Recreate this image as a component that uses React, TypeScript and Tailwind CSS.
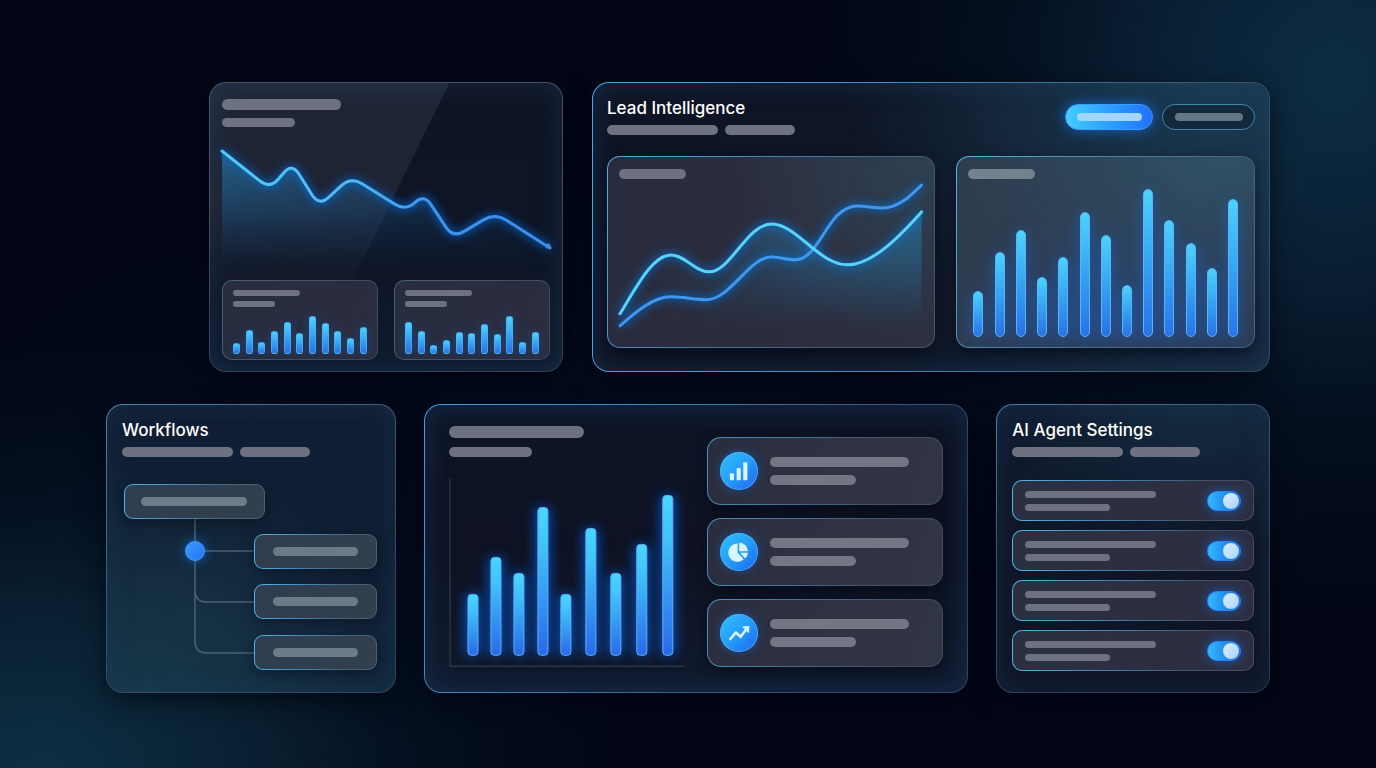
import type { ReactNode } from 'react';
import { clsx } from 'clsx';

type Point = [number, number];

/** Builds a polyline path whose inner corners are rounded off by `radius`. */
function roundedPath(points: Point[], radius: number): string {
  const toward = (from: Point, to: Point): Point => {
    const length = Math.hypot(to[0] - from[0], to[1] - from[1]);
    const t = Math.min(radius / length, 0.5);
    return [from[0] + (to[0] - from[0]) * t, from[1] + (to[1] - from[1]) * t];
  };
  let d = `M${points[0].join(' ')}`;
  for (let i = 1; i < points.length - 1; i++) {
    const before = toward(points[i], points[i - 1]);
    const after = toward(points[i], points[i + 1]);
    d += ` L${before.join(' ')} Q${points[i].join(' ')} ${after.join(' ')}`;
  }
  return `${d} L${points[points.length - 1].join(' ')}`;
}

const trend = roundedPath(
  [[0, 12], [48, 50], [70, 24], [97, 67], [129, 38], [184, 72], [202, 55], [231, 99], [273, 74], [328, 109]],
  13,
);

const leadsCurve =
  'M1 134 C18 106 34 75 52 75 C66 75 76 92 90 92 C112 92 128 44 153 44 C178 44 200 85 229 85 C252 85 278 60 303 32';
const scoreCurve =
  'M1 146 C16 133 34 117 52 117 C66 117 74 120 87 120 C112 120 130 77 153 77 C162 77 168 80 176 80 C202 80 208 26 239 26 C248 26 254 28 264 28 C280 28 292 16 303 5';

const miniA = [11, 24, 12, 23, 32, 21, 38, 31, 23, 16, 27];
const miniB = [32, 23, 9, 14, 22, 21, 30, 20, 38, 12, 22];
const leadBars = [46, 85, 107, 60, 80, 125, 102, 52, 148, 117, 94, 69, 138];
const overviewBars: Point[] = [
  [24, 61], [47, 98], [70, 82], [94, 148], [117, 61], [142, 127], [167, 82], [193, 111], [219, 160],
];

const tones = {
  gray: 'bg-[#6d7180]',
  light: 'bg-[#737784]',
  teal: 'bg-[#6d7b89]',
  mist: 'bg-[#74818e]',
};

function Line({ className, tone = 'gray' }: { className: string; tone?: keyof typeof tones }) {
  return <div className={clsx('max-w-full rounded-full', tones[tone], className)} />;
}

function Card({ className, children }: { className: string; children: ReactNode }) {
  return (
    <section
      className={clsx(
        'relative min-w-0 overflow-hidden rounded-[17px] border border-transparent',
        className,
      )}
    >
      {children}
    </section>
  );
}

function Heading({ title }: { title: string }) {
  return (
    <header>
      <h2 className="text-[17px] leading-6 font-medium text-white">{title}</h2>
      <div className="mt-[5px] flex gap-[7px]">
        <Line className="h-2.5 w-[111px]" />
        <Line className="h-2.5 w-[70px]" />
      </div>
    </header>
  );
}

function Bars({ values, thin }: { values: number[]; thin?: boolean }) {
  return (
    <div className="mt-auto flex items-end justify-between">
      {values.map((value, i) => (
        <div
          key={i}
          style={{ height: value }}
          className={clsx(
            'border bg-linear-to-b from-[#4dd2fc] to-[#2b72e6]',
            thin
              ? 'w-[7px] rounded-[3px] border-[#4fb0f2]/70 shadow-[0_0_8px_#1567c866]'
              : 'w-2.5 rounded-[5px] border-[#57b4f6] shadow-[0_2px_14px_#1a6ce088]',
          )}
        />
      ))}
    </div>
  );
}

function MiniCard({ values }: { values: number[] }) {
  return (
    <div className="flex h-20 min-w-0 flex-1 flex-col rounded-[10px] border border-transparent px-[10px] pt-[9px] pb-[5px] [background:linear-gradient(120deg,#272c3f,#2c2e40)_padding-box,linear-gradient(120deg,#4b6076,#3d475a)_border-box]">
      <Line className="h-1.5 w-[67px]" />
      <Line className="mt-[5px] h-1.5 w-[42px]" />
      <Bars values={values} thin />
    </div>
  );
}

function TrendCard() {
  return (
    <Card className="px-3 pt-4 pb-[11px] shadow-[0_8px_24px_#00020a99,inset_0_0_26px_#1c3a5a88] [background:linear-gradient(180deg,#0f1424,#0e1526_60%,#0f1b2e)_padding-box,linear-gradient(170deg,#46566b,#2f4157)_border-box]">
      <div className="pointer-events-none absolute inset-0 bg-linear-to-b from-[#8e9ab822] via-[#a09aa01c] via-40% to-transparent to-75% [clip-path:polygon(0_0,68%_0,28%_100%,0_100%)]" />
      <div className="relative">
        <Line className="h-[11px] w-[119px]" />
        <Line className="mt-2 h-[9px] w-[73px]" />
        <svg viewBox="0 0 328 140" className="mt-3 block h-auto w-full overflow-visible" aria-hidden="true">
          <defs>
            <linearGradient id="trend-line" x1="0" x2="1">
              <stop offset="0" stopColor="#4fcaf6" />
              <stop offset="0.4" stopColor="#4db9f3" />
              <stop offset="0.65" stopColor="#3a93ec" />
              <stop offset="1" stopColor="#3b8ee8" />
            </linearGradient>
            <linearGradient id="trend-area" x1="0" x2="0" y1="0" y2="1">
              <stop offset="0" stopColor="#2b86b4" stopOpacity="0.65" />
              <stop offset="0.5" stopColor="#1d5f92" stopOpacity="0.45" />
              <stop offset="1" stopColor="#143a66" stopOpacity="0" />
            </linearGradient>
            <linearGradient id="trend-fade" x1="0" x2="1">
              <stop offset="0" stopColor="#fff" />
              <stop offset="1" stopColor="#fff" stopOpacity="0.35" />
            </linearGradient>
            <mask id="trend-mask">
              <rect width="330" height="140" fill="url(#trend-fade)" />
            </mask>
            <filter id="glow" x="-10%" y="-30%" width="120%" height="160%">
              <feGaussianBlur stdDeviation="4" />
            </filter>
            <filter id="bar-glow" x="-200%" y="-20%" width="500%" height="140%">
              <feGaussianBlur stdDeviation="6" />
            </filter>
          </defs>
          <path d={`${trend} V134 H0 Z`} fill="url(#trend-area)" mask="url(#trend-mask)" />
          <path d={trend} fill="none" stroke="#0a6be0" strokeWidth="6" opacity="0.75" filter="url(#glow)" />
          <path d={trend} fill="none" stroke="url(#trend-line)" strokeWidth="3" strokeLinecap="round" />
          <circle cx="326" cy="107" r="2.5" fill="#3b8ee8" />
        </svg>
        <div className="mt-px flex gap-4">
          <MiniCard values={miniA} />
          <MiniCard values={miniB} />
        </div>
      </div>
    </Card>
  );
}

function LeadCard() {
  return (
    <Card className="px-3.5 pt-[13px] pb-[23px] shadow-[0_8px_24px_#00020a99,inset_0_0_26px_#1e4a7066] [background:radial-gradient(ellipse_55%_90%_at_92%_0%,#1a3a50,transparent)_padding-box,linear-gradient(100deg,#0e1425,#0e1526_45%,#16283f)_padding-box,linear-gradient(100deg,#4aa8e8,#3f8ac4_45%,#3d5a72_80%,#35485f)_border-box]">
      <div className="flex items-start justify-between">
        <Heading title="Lead Intelligence" />
        <div className="mt-2 flex gap-[9px]">
          <button
            type="button"
            aria-label="Primary action"
            className="flex h-[26px] w-[88px] items-center justify-center rounded-full border border-[#3d9cf8] bg-linear-to-r from-[#45ccff] to-[#2370fa] shadow-[0_0_14px_#1173eecc]"
          >
            <span className="h-2 w-[65px] rounded-full bg-[#a3d5ff]" />
          </button>
          <button
            type="button"
            aria-label="Secondary action"
            className="flex h-[26px] w-[93px] items-center justify-center rounded-full border border-[#4286b4] bg-[#12293c]"
          >
            <span className="h-2 w-[68px] rounded-full bg-[#647784]" />
          </button>
        </div>
      </div>
      <div className="mt-[21px] grid grid-cols-[329fr_299fr] gap-[21px]">
        <div className="min-w-0 rounded-[13px] border border-transparent px-[11px] pt-3 pb-[11px] shadow-[0_4px_14px_#00020a77] [background:radial-gradient(ellipse_60%_100%_at_100%_0%,#2d4152,transparent)_padding-box,linear-gradient(90deg,#292c3e,#2d2f40)_padding-box,linear-gradient(120deg,#4fb0ea,#4079ac_45%,#475668_80%)_border-box]">
          <Line className="h-2.5 w-[67px]" />
          <svg viewBox="0 0 305 156" className="mt-px block h-auto w-full overflow-visible" aria-hidden="true">
            <defs>
              <linearGradient id="lead-area" x1="0" x2="0" y1="0" y2="1">
                <stop offset="0" stopColor="#2a7fb0" stopOpacity="0.65" />
                <stop offset="0.55" stopColor="#26658e" stopOpacity="0.45" />
                <stop offset="1" stopColor="#22587c" stopOpacity="0" />
              </linearGradient>
              <linearGradient id="lead-fade" x1="0" x2="1">
                <stop offset="0.1" stopColor="#fff" stopOpacity="0" />
                <stop offset="0.6" stopColor="#fff" stopOpacity="0.85" />
                <stop offset="1" stopColor="#fff" />
              </linearGradient>
              <mask id="lead-mask">
                <rect width="305" height="157" fill="url(#lead-fade)" />
              </mask>
            </defs>
            <path d={`${leadsCurve} V148 H1 Z`} fill="url(#lead-area)" mask="url(#lead-mask)" />
            <g fill="none" strokeWidth="6" stroke="#0a74e0" opacity="0.7" filter="url(#glow)">
              <path d={scoreCurve} />
              <path d={leadsCurve} />
            </g>
            <g fill="none" strokeWidth="3" strokeLinecap="round">
              <path d={scoreCurve} stroke="#3f97ee" />
              <path d={leadsCurve} stroke="#58d2f8" />
            </g>
          </svg>
        </div>
        <div className="flex min-w-0 flex-col rounded-[13px] border border-transparent px-4 pt-3 pb-2.5 shadow-[0_4px_14px_#00020a77] [background:radial-gradient(ellipse_60%_55%_at_55%_82%,#2a4c8a88,transparent)_padding-box,radial-gradient(ellipse_90%_90%_at_90%_0%,#2f5065,transparent)_padding-box,linear-gradient(120deg,#2e3c4e,#2c3a50)_padding-box,linear-gradient(120deg,#54b8ec,#4580aa_40%,#4a6478_75%)_border-box]">
          <Line tone="mist" className="-ml-[5px] h-2.5 w-[67px]" />
          <Bars values={leadBars} />
        </div>
      </div>
    </Card>
  );
}

function WorkflowNode({ className, children }: { className: string; children: ReactNode }) {
  return (
    <div
      className={clsx(
        'absolute flex h-[35px] items-center justify-center rounded-[9px] border border-transparent shadow-[0_4px_12px_#00081466] [background:linear-gradient(100deg,#2f3d4e,#323f4f)_padding-box,linear-gradient(105deg,#52b6ec,#4286b8_40%,#4a6074_75%)_border-box]',
        className,
      )}
    >
      {children}
    </div>
  );
}

function WorkflowsCard() {
  return (
    <Card className="px-[15px] pt-[13px] shadow-[0_8px_24px_#00020a99,inset_0_0_26px_#2248684d] [background:radial-gradient(ellipse_90%_80%_at_15%_100%,#17384a,transparent)_padding-box,linear-gradient(180deg,#111e34,#101f33_50%,#12253a)_padding-box,linear-gradient(150deg,#4886b4,#35506c_50%,#2f4560)_border-box]">
      <Heading title="Workflows" />
      <div className="relative mt-[27px] ml-0.5 h-[187px] w-[253px]">
        <svg viewBox="0 0 253 187" className="absolute inset-0 size-full" aria-hidden="true">
          <g fill="none" stroke="#4a6174" strokeWidth="1.5">
            <path d="M71 34 V157 Q71 169 83 169 H131" />
            <path d="M71 106 Q71 118 83 118 H131" />
            <path d="M71 67 H131" />
          </g>
        </svg>
        <div className="absolute top-[57px] left-[61px] size-5 rounded-full border border-[#4c9cf4] bg-linear-to-br from-[#3a9cff] to-[#2474f6] shadow-[0_0_12px_#1173eecc]" />
        <WorkflowNode className="top-0 left-0 w-[141px]">
          <Line tone="teal" className="h-[9px] w-[106px]" />
        </WorkflowNode>
        <WorkflowNode className="top-[50px] right-0 w-[123px]">
          <Line tone="teal" className="h-[9px] w-[85px]" />
        </WorkflowNode>
        <WorkflowNode className="top-[100px] right-0 w-[123px]">
          <Line tone="teal" className="h-[9px] w-[85px]" />
        </WorkflowNode>
        <WorkflowNode className="top-[151px] right-0 w-[123px]">
          <Line tone="teal" className="h-[9px] w-[85px]" />
        </WorkflowNode>
      </div>
    </Card>
  );
}

function BarsIcon() {
  return (
    <svg viewBox="0 0 38 38" className="size-full" fill="#d8f4ff" aria-hidden="true">
      <rect x="9.8" y="21.3" width="4.2" height="7" rx="1" />
      <rect x="16.6" y="16" width="4.2" height="12.3" rx="1" />
      <rect x="23.2" y="10.2" width="4.2" height="18.1" rx="1" />
    </svg>
  );
}

function PieIcon() {
  return (
    <svg viewBox="0 0 38 38" className="size-full" fill="#d8f4ff" aria-hidden="true">
      <path d="M17.6 10.6 A9.1 9.1 0 1 0 23.8 26.2 L17.6 19.8 Z" />
      <path d="M19.2 9.4 A9.1 9.1 0 0 1 27.9 18.3 H19.2 Z" />
      <path d="M20 19.8 H28 A9.1 9.1 0 0 1 25.2 25.4 Z" />
    </svg>
  );
}

function TrendIcon() {
  return (
    <svg viewBox="0 0 38 38" className="size-full" aria-hidden="true">
      <path
        d="M10.3 25 L15.8 18.6 L20.6 22.8 L26 15.8"
        fill="none"
        stroke="#d8f4ff"
        strokeWidth="2.6"
        strokeLinecap="round"
        strokeLinejoin="round"
      />
      <path d="M22.8 13 L29 12.4 L28.4 18.6 Z" fill="#d8f4ff" stroke="#d8f4ff" strokeLinejoin="round" />
    </svg>
  );
}

function OverviewCard() {
  return (
    <Card className="grid grid-cols-2 items-end gap-[23px] px-6 pt-[21px] pb-[25px] shadow-[0_8px_24px_#00020a99,inset_0_0_28px_#1a446e77] [background:linear-gradient(180deg,#0e1426,#0e1223_50%,#101a2e)_padding-box,linear-gradient(120deg,#4a9ddc,#3a74aa_45%,#2f4765_80%)_border-box]">
      <div>
        <Line className="h-3 w-[135px]" />
        <Line className="mt-[9px] h-2.5 w-[83px]" />
        <svg viewBox="0 0 236 188" className="mt-[22px] block h-auto w-full overflow-visible" aria-hidden="true">
          <defs>
            <linearGradient id="bar-fill" x1="0" x2="0" y1="0" y2="1">
              <stop offset="0" stopColor="#4ad6fd" />
              <stop offset="0.25" stopColor="#41c4fa" />
              <stop offset="1" stopColor="#2a68ea" />
            </linearGradient>
          </defs>
          <path d="M1 0 V188" stroke="#2c3443" strokeWidth="1.5" />
          <path d="M0 187.5 H236" stroke="#2c3443" strokeWidth="1.5" />
          {overviewBars.map(([x, h]) => (
            <rect
              key={x}
              x={x - 8}
              y={176 - h}
              width="16"
              height={h}
              rx="5"
              fill="#0f5ad8"
              opacity="0.75"
              filter="url(#bar-glow)"
            />
          ))}
          {overviewBars.map(([x, h]) => (
            <rect
              key={x}
              x={x - 5}
              y={176.5 - h}
              width="10"
              height={h}
              rx="3.5"
              fill="url(#bar-fill)"
              stroke="#57b4f8"
            />
          ))}
        </svg>
      </div>
      <ul className="flex flex-col gap-[13px]">
        {[BarsIcon, PieIcon, TrendIcon].map((Icon, i) => (
          <li
            key={i}
            className="flex h-[68px] items-center gap-3 rounded-[14px] border border-transparent pl-3 shadow-[0_4px_14px_#00020a77] [background:linear-gradient(110deg,#292d3e,#2f3344_60%,#313446)_padding-box,linear-gradient(110deg,#4a92be,#44698c_45%,#424d60_80%)_border-box]"
          >
            <span className="size-[38px] shrink-0 rounded-full bg-linear-to-br from-[#33c1fb] via-[#259df8] to-[#2360ee] shadow-[0_0_10px_#1173ee77,inset_0_0_0_1px_#5cb2f8aa]">
              <Icon />
            </span>
            <span className="min-w-0 flex-1">
              <Line tone="light" className="h-2.5 w-[139px]" />
              <Line tone="light" className="mt-2 h-2.5 w-[86px]" />
            </span>
          </li>
        ))}
      </ul>
    </Card>
  );
}

function SettingsCard() {
  return (
    <Card className="px-[15px] pt-[13px] pb-[21px] shadow-[0_8px_24px_#00020a99,inset_0_0_26px_#22486855] [background:radial-gradient(ellipse_80%_50%_at_75%_0%,#132a3f,transparent)_padding-box,linear-gradient(180deg,#101a2e,#0e1628_50%,#0e1425)_padding-box,linear-gradient(150deg,#4582ae,#35506c_40%,#2c3850)_border-box]">
      <Heading title="AI Agent Settings" />
      <ul className="mt-[23px] flex flex-col gap-[9px]">
        {[1, 2, 3, 4].map((n) => (
          <li
            key={n}
            className="flex h-[41px] items-center justify-between rounded-[10px] border border-transparent px-3 [background:linear-gradient(100deg,#2a3041,#2d2e41)_padding-box,linear-gradient(105deg,#54b6e8,#4285b4_40%,#434e62_80%)_border-box]"
          >
            <label htmlFor={`setting-${n}`} className="flex min-w-0 flex-col gap-1.5">
              <Line className="h-[7px] w-[131px]" />
              <Line className="h-[7px] w-[85px]" />
            </label>
            <input
              id={`setting-${n}`}
              type="checkbox"
              role="switch"
              aria-label={`Setting ${n}`}
              defaultChecked
              className="flex h-5 w-[34px] shrink-0 cursor-pointer appearance-none items-center justify-start rounded-full border border-[#2a86ee] bg-[#2b3a50] px-px shadow-[0_0_12px_#1173ee99] before:size-4 before:rounded-full before:bg-linear-to-br before:from-[#dceeff] before:to-[#a8d3ff] before:content-[''] checked:justify-end checked:bg-linear-to-r checked:from-[#35b8fd] checked:to-[#1c67e4]"
            />
          </li>
        ))}
      </ul>
    </Card>
  );
}

export default function App() {
  return (
    <main className="flex min-h-screen flex-col gap-8 py-[82px] pr-[7.7%] pl-[7.7%] font-['Inter','Liberation_Sans',sans-serif] [background:radial-gradient(ellipse_38%_70%_at_97%_10%,#0c2c42,#0b263bdd_30%,#07182a88_62%,transparent),radial-gradient(ellipse_42%_56%_at_3%_100%,#0d2f44,#0b2739dd_32%,#07192b88_62%,transparent),radial-gradient(ellipse_50%_30%_at_45%_52%,#030b1c,transparent),#020616]">
      <div className="grid grid-cols-[354fr_678fr] gap-[29px] pl-[103px]">
        <TrendCard />
        <LeadCard />
      </div>
      <div className="grid grid-cols-[290fr_545fr_274fr] gap-7">
        <WorkflowsCard />
        <OverviewCard />
        <SettingsCard />
      </div>
    </main>
  );
}
